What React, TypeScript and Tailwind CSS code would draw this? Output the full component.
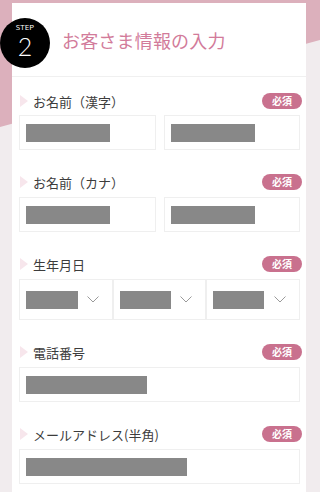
// Step 2 — customer info form (mobile)

const FONT = { fontFamily: '"Noto Sans CJK JP", "Noto Sans", sans-serif' };

function Label({ text }: { text: string }) {
  return (
    <div className="flex items-center justify-between h-4">
      <div className="flex items-center">
        <span className="w-0 h-0 border-y-[6px] border-y-transparent border-l-[8px] border-l-[#f7e6ec] ml-[1px]" />
        <span className="ml-[5px] text-[13px] leading-none text-[#3c3c3c]">{text}</span>
      </div>
      <span className="flex items-center justify-center w-10 h-4 rounded-full bg-[#c9718e] text-[10px] font-bold leading-none text-white mr-[-2px]">
        必須
      </span>
    </div>
  );
}

function Box({ w, wide }: { w: number; wide?: boolean }) {
  return (
    <div className={`flex items-center border border-[#efefef] bg-white h-[35px] px-[6px] ${wide ? "w-full" : ""}`}>
      <div className="h-[18px] bg-[#888888]" style={{ width: w }} />
    </div>
  );
}

function Select({ w }: { w: number }) {
  return (
    <div className="flex items-center justify-between border border-[#efefef] bg-white h-[41px] pl-[6px] pr-[13px]">
      <div className="h-[18px] bg-[#888888]" style={{ width: w }} />
      <svg width="12" height="7" viewBox="0 0 12 7" fill="none" stroke="#9a9a9a" strokeWidth="1">
        <path d="M0.5 0.5 6 6 11.5 0.5" />
      </svg>
    </div>
  );
}

export default function App() {
  return (
    <div className="relative w-[320px] h-[492px] overflow-hidden bg-[#f1ecee]" style={FONT}>
      {/* pink diagonal backdrop */}
      <div
        className="absolute inset-0 bg-[#dcb0bc]"
        style={{ clipPath: "polygon(0 0, 100% 0, 100% 40px, 0 127px)" }}
      />

      <div className="relative ml-3 mt-[3px] w-[294px] bg-white pb-10">
        {/* header */}
        <div className="relative flex items-center h-[74px] border-b border-[#f0f0f0] pl-[50px]">
          <div className="absolute left-[-12px] top-[15px] flex flex-col items-center w-[50px] h-[50px] rounded-full bg-black text-white pt-[5px]">
            <span className="text-[8px] leading-[8px] tracking-[0.02em]" style={{ fontFamily: '"Open Sans", sans-serif' }}>
              STEP
            </span>
            <span className="text-[25px] leading-[25px] font-light mt-[3px]" style={{ fontFamily: '"Lato", "Open Sans", sans-serif' }}>
              2
            </span>
          </div>
          <h1 className="text-[18px] leading-none text-[#d27b9a] tracking-[0.01em]">お客さま情報の入力</h1>
        </div>

        <div className="flex flex-col gap-6 pt-4 pl-[7px] pr-[6px]">
          <section className="flex flex-col gap-[6px]">
            <Label text="お名前（漢字）" />
            <div className="grid grid-cols-2 gap-[8px]">
              <Box w={84} />
              <Box w={84} />
            </div>
          </section>

          <section className="flex flex-col gap-[7px]">
            <Label text="お名前（カナ）" />
            <div className="grid grid-cols-2 gap-[8px]">
              <Box w={84} />
              <Box w={84} />
            </div>
          </section>

          <section className="flex flex-col gap-[7px]">
            <Label text="生年月日" />
            <div className="grid grid-cols-3">
              <Select w={52} />
              <Select w={51} />
              <Select w={51} />
            </div>
          </section>

          <section className="flex flex-col gap-[7px]">
            <Label text="電話番号" />
            <Box w={121} wide />
          </section>

          <section className="flex flex-col gap-[7px]">
            <Label text="メールアドレス(半角)" />
            <Box w={161} wide />
          </section>
        </div>
      </div>
    </div>
  );
}
